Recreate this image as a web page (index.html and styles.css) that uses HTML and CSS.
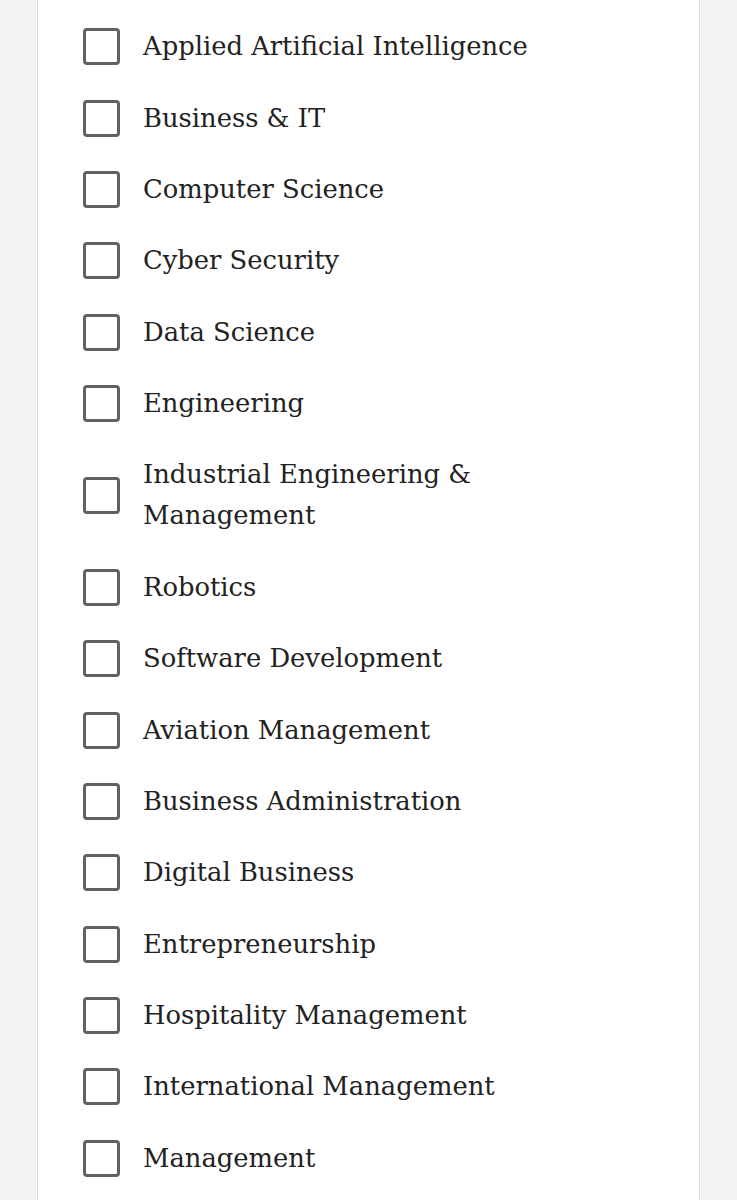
FILE: index.html
```html
<!DOCTYPE html>
<html lang="en">
<head>
    <meta charset="UTF-8">
    <meta name="viewport" content="width=device-width, initial-scale=1.0">
    <title>Programmes</title>
    <link rel="stylesheet" href="styles.css">
</head>
<body>
    <div class="card">
        <!-- Programme filter list -->
        <ul class="options">
            <li><label class="option"><input type="checkbox"><span class="box"></span><span class="name">Applied Artificial Intelligence</span></label></li>
            <li><label class="option"><input type="checkbox"><span class="box"></span><span class="name">Business &amp; IT</span></label></li>
            <li><label class="option"><input type="checkbox"><span class="box"></span><span class="name">Computer Science</span></label></li>
            <li><label class="option"><input type="checkbox"><span class="box"></span><span class="name">Cyber Security</span></label></li>
            <li><label class="option"><input type="checkbox"><span class="box"></span><span class="name">Data Science</span></label></li>
            <li><label class="option"><input type="checkbox"><span class="box"></span><span class="name">Engineering</span></label></li>
            <li><label class="option"><input type="checkbox"><span class="box"></span><span class="name">Industrial Engineering &amp; Management</span></label></li>
            <li><label class="option"><input type="checkbox"><span class="box"></span><span class="name">Robotics</span></label></li>
            <li><label class="option"><input type="checkbox"><span class="box"></span><span class="name">Software Development</span></label></li>
            <li><label class="option"><input type="checkbox"><span class="box"></span><span class="name">Aviation Management</span></label></li>
            <li><label class="option"><input type="checkbox"><span class="box"></span><span class="name">Business Administration</span></label></li>
            <li><label class="option"><input type="checkbox"><span class="box"></span><span class="name">Digital Business</span></label></li>
            <li><label class="option"><input type="checkbox"><span class="box"></span><span class="name">Entrepreneurship</span></label></li>
            <li><label class="option"><input type="checkbox"><span class="box"></span><span class="name">Hospitality Management</span></label></li>
            <li><label class="option"><input type="checkbox"><span class="box"></span><span class="name">International Management</span></label></li>
            <li><label class="option"><input type="checkbox"><span class="box"></span><span class="name">Management</span></label></li>
        </ul>
    </div>
</body>
</html>
```

FILE: styles.css
```css
body {
    margin: 0;
    background-color: #f1f3f1;
    font-family: "DejaVu Serif", "Liberation Serif", serif;
    color: #222;
    overflow: hidden;
}
.card {
    margin: 0 37px 0 37px;
    background-color: white;
    border-left: 1px solid #dcdcdc;
    border-right: 1px solid #dcdcdc;
    padding: 11px 130px 20px 45px;
    min-height: 1200px;
}
.options {
    list-style: none;
    margin: 0;
    padding: 0;
}
.option {
    display: flex;
    align-items: center;
    gap: 23px;
    padding: 15.2px 0;
    font-size: 25.8px;
    line-height: 41px;
    cursor: pointer;
}
.option input {
    display: none;
}
.option .box {
    flex: none;
    width: 31px;
    height: 31px;
    border: 3px solid #5f6164;
    border-radius: 4px;
}
```
